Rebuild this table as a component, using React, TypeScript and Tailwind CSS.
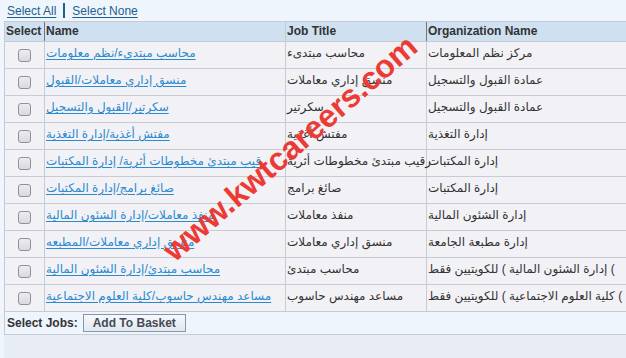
const jobs = [
  { name: "محاسب مبتدىء/نظم معلومات", title: "محاسب مبتدىء", org: "مركز نظم المعلومات" },
  { name: "منسق إداري معاملات/القبول", title: "منسق إداري معاملات", org: "عمادة القبول والتسجيل" },
  { name: "سكرتير/القبول والتسجيل", title: "سكرتير", org: "عمادة القبول والتسجيل" },
  { name: "مفتش أغذية/إدارة التغذية", title: "مفتش أغذية", org: "إدارة التغذية" },
  { name: "رقيب مبتدئ مخطوطات أثرية/ إدارة المكتبات", title: "رقيب مبتدئ مخطوطات أثرية", org: "إدارة المكتبات" },
  { name: "صائغ برامج/إدارة المكتبات", title: "صائغ برامج", org: "إدارة المكتبات" },
  { name: "منفذ معاملات/إدارة الشئون المالية", title: "منفذ معاملات", org: "إدارة الشئون المالية" },
  { name: "منسق إداري معاملات/المطبعه", title: "منسق إداري معاملات", org: "إدارة مطبعة الجامعة" },
  { name: "محاسب مبتدئ/إدارة الشئون المالية", title: "محاسب مبتدئ", org: ") إدارة الشئون المالية ) للكويتيين فقط", rtl: true },
  { name: "مساعد مهندس حاسوب/كلية العلوم الاجتماعية", title: "مساعد مهندس حاسوب", org: ") كلية العلوم الاجتماعية ) للكويتيين فقط", rtl: true },
];

function Checkbox() {
  return (
    <div className="h-[13px] w-[13px] rounded-[3px] border border-[#8f909c] bg-gradient-to-b from-[#ededf0] to-[#d9d9de]" />
  );
}

export default function App() {
  return (
    <div className="relative h-[358px] w-[626px] overflow-hidden bg-[#eef5fd] font-['Liberation_Sans','DejaVu_Sans',sans-serif] text-[12px] text-[#333]">
      {/* toolbar */}
      <div className="flex h-[21px] items-center pl-[7px] text-[#1f5f8e]">
        <a className="underline underline-offset-2">Select All</a>
        <div className="mx-[7px] h-[15px] w-[2px] bg-[#1f5f8e]" />
        <a className="underline underline-offset-2">Select None</a>
      </div>

      <div className="ml-[4px] h-full bg-[#e8edf5]">
        <div className="w-[700px] border-l border-t border-[#c6cad4]">
          {/* header */}
          <div className="grid h-[20px] grid-cols-[40px_241px_141px_1fr] border-b border-[#c6cad4] bg-[#cfe0f0] font-bold leading-[19px] text-[#333]">
            <div className="border-r border-[#6e7480] pl-[1px]">Select</div>
            <div className="border-r border-[#c6cad4] pl-[1px]">Name</div>
            <div className="border-r border-[#6e7480] pl-[1px]">Job Title</div>
            <div className="pl-[1px]">Organization Name</div>
          </div>

          {jobs.map((job, i) => (
            <div
              key={i}
              className="grid h-[27px] grid-cols-[40px_241px_141px_1fr] border-b border-[#c9cbd4] bg-[#f2f2f6] text-left leading-[23px]"
            >
              <div className="flex items-center justify-center border-r border-[#c9cbd4]">
                <Checkbox />
              </div>
              <div className="overflow-hidden whitespace-nowrap border-r border-[#c9cbd4] pl-[1px]">
                <a className="text-[#2b8ace] underline underline-offset-2">{job.name}</a>
              </div>
              <div className="whitespace-nowrap border-r border-[#c9cbd4] pl-[1px]">
                <span>{job.title}</span>
              </div>
              <div className="whitespace-nowrap pl-[1px]">
                {job.rtl ? <span dir="rtl">{job.org}</span> : <span>{job.org}</span>}
              </div>
            </div>
          ))}

          {/* footer */}
          <div className="flex h-[23px] items-center gap-[5px] border-b border-[#c9cbd4] bg-[#eef5fd] pl-[2px]">
            <span className="font-bold text-[#333]">Select Jobs:</span>
            <button className="h-[18px] border border-[#8796a6] bg-gradient-to-b from-[#f6f9fc] to-[#e1e8f0] px-[9px] font-bold leading-none text-[#474a55]">
              Add To Basket
            </button>
          </div>
        </div>
      </div>

      {/* watermark */}
      <span className="pointer-events-none absolute left-[290px] top-[148px] -translate-x-1/2 -translate-y-1/2 rotate-[-41deg] whitespace-nowrap text-[32px] font-bold leading-none text-[#ec3b35]">
        www.kwtcareers.com
      </span>
    </div>
  );
}
